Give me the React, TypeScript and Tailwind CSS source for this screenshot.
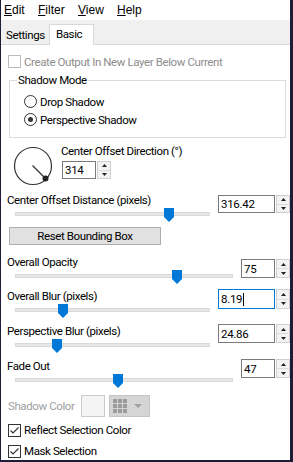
import clsx from "clsx";

function Check({ checked, disabled }: { checked?: boolean; disabled?: boolean }) {
  return (
    <div
      className={clsx(
        "w-[13px] h-[13px] border bg-white flex items-center justify-center shrink-0",
        disabled ? "border-[#bcbcbc]" : "border-[#333333]"
      )}
    >
      {checked && (
        <svg width="11" height="11" viewBox="0 0 11 11">
          <path d="M1.5 5.5L4 8L9.5 2.5" stroke="#333" strokeWidth="1.2" fill="none" />
        </svg>
      )}
    </div>
  );
}

function Radio({ on }: { on?: boolean }) {
  return (
    <div className="w-[13px] h-[13px] rounded-full border border-[#333333] bg-white flex items-center justify-center shrink-0">
      {on && <div className="w-[5px] h-[5px] rounded-full bg-[#333333]" />}
    </div>
  );
}

function SpinBox({
  value,
  width,
  focused,
  className,
}: {
  value: string;
  width: string;
  focused?: boolean;
  className?: string;
}) {
  return (
    <div className={clsx("flex shrink-0", className)}>
      <div
        className={clsx(
          "h-full border bg-white flex items-center pl-[2px] text-[11.5px] tracking-[-0.3px]",
          focused ? "border-[#0078d7]" : "border-[#7a7a7a]",
          width
        )}
      >
        {value}
        {focused && <span className="ml-px w-px h-[13px] bg-black" />}
      </div>
      <div className="ml-px w-[14px] h-full flex flex-col border border-[#cfcfcf] bg-[#f3f3f3]">
        <div className="flex-1 flex items-center justify-center border-b border-[#dcdcdc]">
          <svg width="5" height="3" viewBox="0 0 5 3">
            <path d="M0 3L2.5 0L5 3Z" fill="#222" />
          </svg>
        </div>
        <div className="flex-1 flex items-center justify-center">
          <svg width="5" height="3" viewBox="0 0 5 3">
            <path d="M0 0L5 0L2.5 3Z" fill="#222" />
          </svg>
        </div>
      </div>
    </div>
  );
}

function SliderRow({
  label,
  value,
  thumb,
  wide,
  focused,
  className,
  spinClass,
}: {
  label: string;
  value: string;
  thumb: number;
  wide?: boolean;
  focused?: boolean;
  className?: string;
  spinClass?: string;
}) {
  return (
    <div className={clsx("flex items-start h-[29px] shrink-0", className)}>
      <div className="flex-1">
        <div className="h-[14px] pl-[6px]">{label}</div>
        <div className={clsx("relative ml-[14px] mt-px h-[14px] pt-[4px]", wide ? "w-[218px]" : "w-[195px]")}>
          <div className="h-[4px] bg-[#e7e7e7] border border-[#d9d9d9]" />
          <svg
            className="absolute top-0"
            style={{ left: thumb }}
            width="10"
            height="14"
            viewBox="0 0 10 14"
          >
            <path d="M0 0H10V9L5 14L0 9Z" fill="#0078d7" />
          </svg>
        </div>
      </div>
      <SpinBox
        value={value}
        width={wide ? "w-[34px]" : "w-[57px]"}
        focused={focused}
        className={spinClass ?? "h-[19px]"}
      />
    </div>
  );
}

export default function App() {
  return (
    <div className="w-[293px] h-[462px] bg-white border-l border-r-[3px] border-b-2 border-[#1d1d35] flex flex-col overflow-hidden font-[family-name:Roboto,Liberation_Sans,sans-serif] text-[11.5px] tracking-[-0.4px] leading-[14px] text-black">
      {/* menu bar */}
      <div className="h-[20px] shrink-0 flex items-center pl-[3px] text-[12px] tracking-normal font-[family-name:Liberation_Sans,Arial,sans-serif]">
        <span className="w-[34px]">
          <u>E</u>dit
        </span>
        <span className="w-[40px]">
          <u>F</u>ilter
        </span>
        <span className="w-[39px]">
          <u>V</u>iew
        </span>
        <span>
          <u>H</u>elp
        </span>
      </div>

      {/* tabs */}
      <div className="h-[25px] shrink-0 bg-[#f0f0f0] border-b border-[#d9d9d9] flex items-end pl-px">
        <div className="w-[47px] h-[18px] flex items-center pl-[4px]">Settings</div>
        <div className="w-[45px] h-[21px] -mb-px bg-white border border-b-0 border-[#d9d9d9] pl-[6px] pb-[2px] flex items-center">
          Basic
        </div>
      </div>

      <div className="flex-1 flex flex-col">
        <div className="mt-[10px] h-[13px] shrink-0 flex items-center pl-[7px] gap-[3px] text-[#8d8d8d]">
          <Check disabled />
          <span>Create Output In New Layer Below Current</span>
        </div>

        {/* shadow mode group */}
        <div className="relative shrink-0 mt-[12px] ml-[8px] mr-[4px] border border-[#dcdcdc] pt-[14px] pb-[11px] pl-[14px] flex flex-col gap-[5px]">
          <span className="absolute left-[7px] -top-[8px] bg-white px-px">Shadow Mode</span>
          <div className="h-[13px] flex items-center gap-[3px]">
            <Radio />
            <span>Drop Shadow</span>
          </div>
          <div className="h-[13px] flex items-center gap-[3px]">
            <Radio on />
            <span>Perspective Shadow</span>
          </div>
        </div>

        {/* direction dial */}
        <div className="mt-[6px] shrink-0 flex items-start">
          <svg className="ml-[12px] mt-[2px] shrink-0" width="40" height="40" viewBox="0 0 40 40">
            <circle cx="20" cy="20" r="18.5" stroke="#333" strokeWidth="1.2" fill="none" />
            <line x1="19.5" y1="19.5" x2="32.5" y2="32.5" stroke="#333" strokeWidth="1.2" />
            <circle cx="32.5" cy="32.5" r="3" fill="#222" />
          </svg>
          <div className="ml-[8px] flex flex-col">
            <div className="h-[14px]">Center Offset Direction (°)</div>
            <SpinBox value="314" width="w-[34px]" className="mt-[3px] ml-px h-[18px]" />
          </div>
        </div>

        <SliderRow
          className="mt-[7px]"
          spinClass="mt-[2px] h-[18px]"
          label="Center Offset Distance (pixels)"
          value="316.42"
          thumb={149}
        />

        <button className="mt-[5px] shrink-0 ml-[8px] w-[152px] h-[18px] bg-[#e1e1e1] border border-[#adadad] flex items-center justify-center">
          Reset Bounding Box
        </button>

        <SliderRow className="mt-[10px]" spinClass="mt-[4px] h-[19px]" label="Overall Opacity" value="75" thumb={157} wide />
        <SliderRow className="mt-[5px]" spinClass="h-[20px]" label="Overall Blur (pixels)" value="8.19" thumb={43} focused />
        <SliderRow className="mt-[6px]" label="Perspective Blur (pixels)" value="24.86" thumb={37} />
        <SliderRow className="mt-[6px]" label="Fade Out" value="47" thumb={98} wide />

        <div className="mt-[7px] h-[22px] shrink-0 flex items-center pl-[7px]">
          <span className="w-[73px] text-[#a0a0a0]">Shadow Color</span>
          <div className="w-[24px] h-[22px] border border-[#cccccc] bg-[#f4f4f4]" />
          <div className="ml-[4px] w-[41px] h-[22px] border border-[#c4c4c4] bg-[#d5d5d5] flex items-center pl-[3px] gap-[7px]">
            <svg width="14" height="14" viewBox="0 0 14 14">
              {[0, 5, 10].map((y) =>
                [0, 5, 10].map((x) => <rect key={`${x}-${y}`} x={x} y={y} width="4" height="4" fill="#9b9b9b" />)
              )}
            </svg>
            <svg width="8" height="4" viewBox="0 0 8 4">
              <path d="M0 0H8L4 4Z" fill="#a0a0a0" />
            </svg>
          </div>
        </div>

        <div className="mt-[6px] h-[14px] shrink-0 flex items-center pl-[7px] gap-[3px]">
          <Check checked />
          <span>Reflect Selection Color</span>
        </div>
        <div className="mt-[7px] h-[14px] shrink-0 flex items-center pl-[7px] gap-[3px]">
          <Check checked />
          <span>Mask Selection</span>
        </div>
      </div>
    </div>
  );
}
